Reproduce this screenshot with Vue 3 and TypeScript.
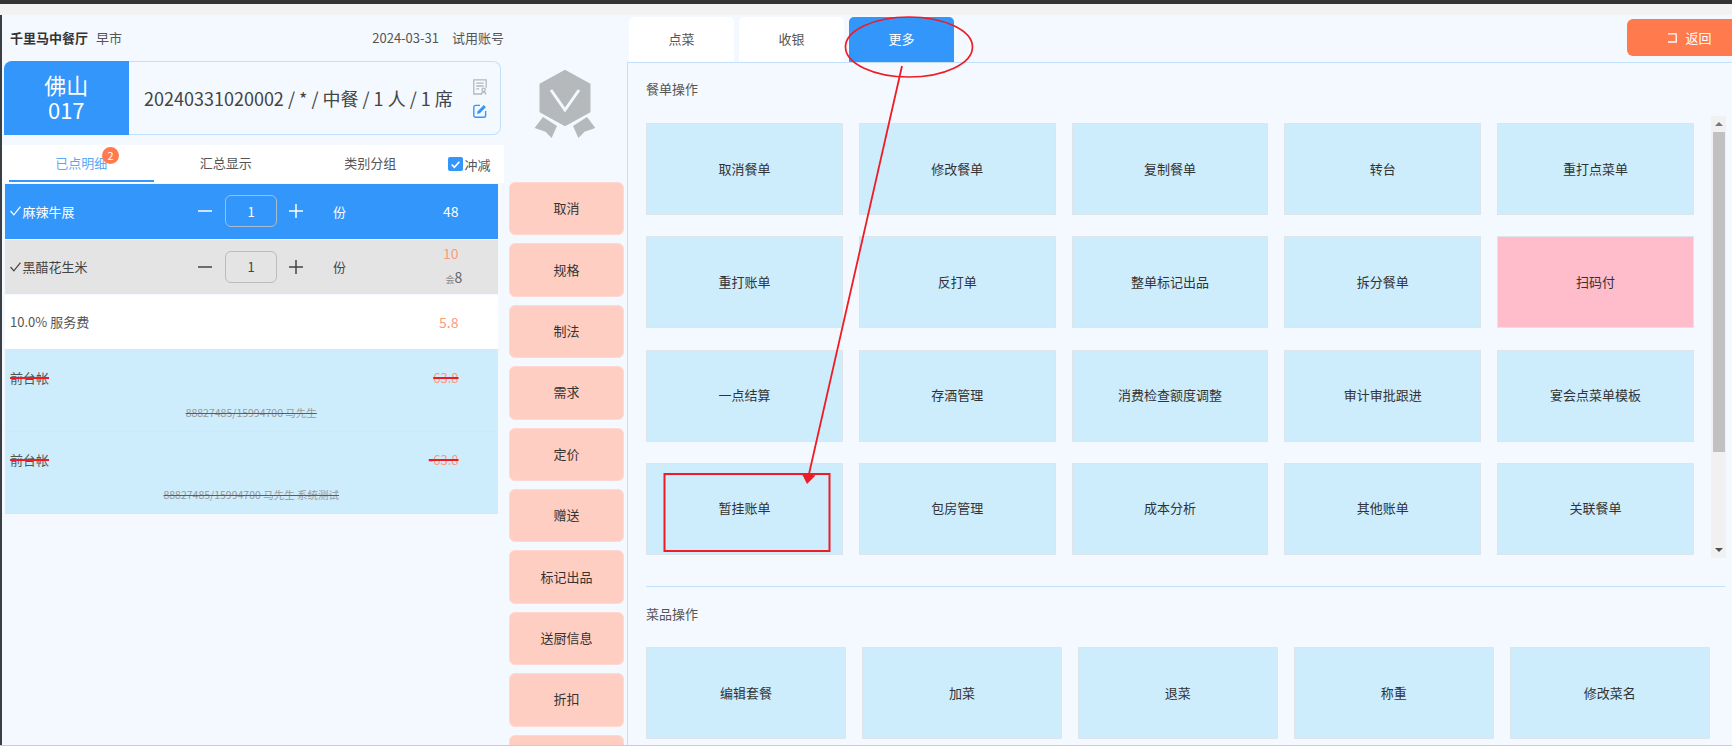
<script setup lang="ts">
const actions: string[] = ['取消', '规格', '制法', '需求', '定价', '赠送', '标记出品', '送厨信息', '折扣', '']
const orderOps: { label: string; pink?: boolean }[] = [
  { label: '取消餐单' }, { label: '修改餐单' }, { label: '复制餐单' }, { label: '转台' }, { label: '重打点菜单' },
  { label: '重打账单' }, { label: '反打单' }, { label: '整单标记出品' }, { label: '拆分餐单' }, { label: '扫码付', pink: true },
  { label: '一点结算' }, { label: '存酒管理' }, { label: '消费检查额度调整' }, { label: '审计审批跟进' }, { label: '宴会点菜单模板' },
  { label: '暂挂账单' }, { label: '包房管理' }, { label: '成本分析' }, { label: '其他账单' }, { label: '关联餐单' }
]
const dishOps: string[] = ['编辑套餐', '加菜', '退菜', '称重', '修改菜名']
</script>

<template>
  <div class="page">
    <div class="topbar"></div>
    <div class="subbar"></div>
    <div class="main">
      <div class="left">
        <div class="head">
          <div><b class="shop">千里马中餐厅</b><span class="meal">早市</span></div>
          <div class="head-right"><span>2024-03-31</span><span>试用账号</span></div>
        </div>

        <div class="info-row">
          <div class="card">
            <div class="table-no"><div>佛山</div><div>017</div></div>
            <div class="order-text">20240331020002 / * / 中餐 / 1 人 / 1 席</div>
            <div class="card-icons">
              <svg width="14" height="16" viewBox="0 0 14 16" fill="none" stroke="#b4b8bc" stroke-width="1.3">
                <path d="M9 15H.8V.8h12.400v8" />
                <path d="M3.200 4.200h7.500M3.200 7h7.500M3.200 9.800h3" />
                <circle cx="10.600" cy="10.800" r="1.600" />
                <path d="M8.400 15.500c.2-1.500 1.100-2.500 2.200-2.500s2 1 2.200 2.500" />
              </svg>
              <svg width="14" height="14" viewBox="0 0 14 14" fill="none" stroke="#3396fb" stroke-width="1.4">
                <path d="M7 1.400H2.600A1.800 1.800 0 0 0 .8 3.200v8.200a1.800 1.800 0 0 0 1.800 1.800h8.200a1.800 1.800 0 0 0 1.800-1.800V7" />
                <path d="M4 10l.7-2.800L10.800 1.100l2.100 2.100-6.100 6.100z" fill="#3396fb" stroke="none" />
              </svg>
            </div>
          </div>
          <div class="medal">
            <svg width="62" height="68" viewBox="0 0 62 68">
              <path d="M.6 58L9 47l14 9-5.400 12-6.100-6.300zM61.400 58L53 47l-14 9 5.400 12 6.100-6.300z" fill="#b5b9bc" />
              <path d="M31 1l24.500 13.500v27L31 55 6.500 41.500v-27z" fill="#b5b9bc" stroke="#b5b9bc" stroke-width="2" stroke-linejoin="round" />
              <path d="M17 20l14 20 14-20" fill="none" stroke="#f4f9ff" stroke-width="3" />
            </svg>
          </div>
        </div>

        <div class="body">
          <div class="orders">
            <div class="tabs">
              <div class="tab active">已点明细<span class="badge">2</span></div>
              <div class="tab">汇总显示</div>
              <div class="tab">类别分组</div>
              <label class="offset">
                <span class="check">
                  <svg width="11" height="11" viewBox="0 0 10 10" fill="none" stroke="#fff" stroke-width="1.600"><path d="M1.500 5l2.500 2.500 4.500-5" /></svg>
                </span>冲减
              </label>
            </div>

            <div class="row dish selected">
              <div class="dish-name"><svg class="tick" width="11" height="10" viewBox="0 0 10 9" fill="none" stroke="currentColor" stroke-width="1.100"><path d="M.5 4.500L3.500 8 9.500 .5" /></svg>麻辣牛展</div>
              <div class="stepper">
                <span class="sym">
                  <svg width="14" height="14" viewBox="0 0 14 14" stroke="currentColor" stroke-width="1.500"><path d="M0 7h14" /></svg>
                </span>
                <span class="qty">1</span>
                <span class="sym">
                  <svg width="14" height="14" viewBox="0 0 14 14" stroke="currentColor" stroke-width="1.500"><path d="M0 7h14M7 0v14" /></svg>
                </span>
              </div>
              <div class="unit">份</div>
              <div class="price">48</div>
            </div>

            <div class="row dish grey">
              <div class="dish-name"><svg class="tick" width="11" height="10" viewBox="0 0 10 9" fill="none" stroke="currentColor" stroke-width="1.100"><path d="M.5 4.500L3.500 8 9.500 .5" /></svg>黑醋花生米</div>
              <div class="stepper">
                <span class="sym">
                  <svg width="14" height="14" viewBox="0 0 14 14" stroke="currentColor" stroke-width="1.500"><path d="M0 7h14" /></svg>
                </span>
                <span class="qty">1</span>
                <span class="sym">
                  <svg width="14" height="14" viewBox="0 0 14 14" stroke="currentColor" stroke-width="1.500"><path d="M0 7h14M7 0v14" /></svg>
                </span>
              </div>
              <div class="unit">份</div>
              <div class="price stack">
                <span class="orange">10</span>
                <span class="member"><small>会</small>8</span>
              </div>
            </div>

            <div class="row fee">
              <div>10.0% 服务费</div>
              <div class="fee-price">5.8</div>
            </div>

            <div class="row ledger">
              <div class="ledger-top">
                <span class="strike name">前台帐</span>
                <span class="strike amount">63.8</span>
              </div>
              <div class="ledger-note"><span class="strike">88827485/15994700 马先生</span></div>
            </div>
            <div class="row ledger">
              <div class="ledger-top">
                <span class="strike name">前台帐</span>
                <span class="strike amount">-63.8</span>
              </div>
              <div class="ledger-note"><span class="strike">88827485/15994700 马先生 系统测试</span></div>
            </div>
          </div>

          <div class="actions">
            <button v-for="(a, i) in actions" :key="i" class="action">{{ a }}</button>
          </div>
        </div>
      </div>

      <div class="right">
        <div class="right-top">
          <div class="rtabs">
            <div class="rtab">点菜</div>
            <div class="rtab">收银</div>
            <div class="rtab on">更多</div>
          </div>
          <button class="back">
            <svg width="11" height="10" viewBox="0 0 11 10" fill="none" stroke="#fff" stroke-width="1.300"><path d="M1 .8h8.200v8.200H1" /></svg>
            <span>返回</span>
          </button>
        </div>

        <div class="panel">
          <div class="sec-title">餐单操作</div>
          <div class="order-area">
            <div class="op-grid">
              <div v-for="op in orderOps" :key="op.label" class="op" :class="{ pink: op.pink }">{{ op.label }}</div>
            </div>
            <div class="scrollbar">
              <i class="arrow up"></i>
              <div class="thumb"></div>
              <i class="arrow down"></i>
            </div>
          </div>
          <div class="divider"></div>
          <div class="sec-title second">菜品操作</div>
          <div class="dish-grid">
            <div v-for="d in dishOps" :key="d" class="op">{{ d }}</div>
          </div>
        </div>
      </div>
    </div>

    <svg class="notes" width="1732" height="746" viewBox="0 0 1732 746" fill="none">
      <ellipse cx="909" cy="47" rx="63.500" ry="30" stroke="#ee1c25" stroke-width="1.700" />
      <path d="M902 66L809 474" stroke="#ee1c25" stroke-width="1.800" />
      <path d="M801.500 473l14 2.500-8.500 8.500z" fill="#ee1c25" />
      <rect x="664.500" y="474" width="165" height="77" stroke="#ee1c25" stroke-width="2" />
    </svg>
  </div>
</template>

<style scoped>
.page {
  position: relative;
  width: 1732px;
  height: 746px;
  overflow: hidden;
  display: flex;
  flex-direction: column;
  background: #f4f9ff;
  font-family: "Noto Sans CJK SC", "Noto Sans", sans-serif;
  color: #333;
  border-bottom: 1px solid #c9cdd1;
  box-sizing: border-box;
}
.topbar { height: 4px; background: #333; flex: none; }
.subbar { height: 11px; background: #f2f2f2; flex: none; }
.main { flex: 1; display: flex; min-height: 0; border-left: 2px solid #3a3f44; }

.left { width: 625px; flex: none; display: flex; flex-direction: column; min-height: 0; }
.head {
  height: 46px;
  flex: none;
  display: flex;
  justify-content: space-between;
  align-items: center;
  padding: 0 0 2px 8px;
  width: 502px;
  box-sizing: border-box;
  font-size: 13px;
  color: #555;
}
.shop { color: #333; font-weight: 700; margin-right: 8px; }
.head-right { display: flex; gap: 13px; }

.info-row { display: flex; flex: none; height: 74px; padding-left: 2px; }
.card {
  width: 497px;
  flex: none;
  box-sizing: border-box;
  display: flex;
  align-items: center;
  background: #f4f9ff;
  border: 1px solid #c2e0fb;
  border-left: none;
  border-radius: 8px;
}
.table-no {
  width: 124.500px;
  height: 74px;
  margin: -1px 0;
  padding-bottom: 2px;
  box-sizing: border-box;
  flex: none;
  background: #3396fb;
  color: #fff;
  border-radius: 8px 0 0 0;
  display: flex;
  flex-direction: column;
  align-items: center;
  justify-content: center;
  font-size: 22px;
  line-height: 25px;
}
.order-text { margin-left: 15.500px; flex: 1; font-size: 18px; color: #444; white-space: nowrap; }
.card-icons {
  width: 27px;
  display: flex;
  flex-direction: column;
  gap: 9px;
  align-items: flex-start;
  flex: none;
}
.medal { width: 62px; flex: none; margin-left: 33px; padding-top: 9px; }

.body { flex: 1; min-height: 0; display: flex; margin-top: 10px; }
.orders { width: 502px; flex: none; }
.tabs {
  height: 38px;
  background: #fff;
  display: flex;
  padding-left: 7px;
  font-size: 13px;
  color: #555;
}
.tab { width: 144.500px; flex: none; line-height: 36px; text-align: center; position: relative; }
.tab.active { color: #5aa8f8; border-bottom: 2px solid #3396fb; height: 35px; }
.badge {
  position: absolute;
  left: 93px;
  top: 1.500px;
  width: 17px;
  height: 17px;
  border-radius: 50%;
  background: #ff7a4d;
  color: #fff;
  font-size: 11px;
  line-height: 17px;
  text-align: center;
}
.offset { display: flex; align-items: center; gap: 2px; margin-left: 5.500px; }
.check {
  width: 14.500px;
  height: 14.500px;
  border-radius: 2px;
  background: #3396fb;
  display: flex;
  align-items: center;
  justify-content: center;
}

.row { margin-left: 3px; width: 492.500px; box-sizing: border-box; font-size: 13px; }
.dish {
  height: 55px;
  display: grid;
  grid-template-columns: 190px 111px 137px 54.500px;
  align-items: center;
  padding-bottom: 1px;
}
.selected { background: #3396fb; color: #fff; margin-top: 1px; }
.grey { background: #e4e4e4; color: #444; margin-top: 1px; height: 54px; }
.dish-name { padding-left: 5px; display: flex; align-items: center; }
.tick { margin-right: 1.500px; flex: none; }
.stepper { display: flex; align-items: center; }
.sym { width: 20px; flex: none; display: flex; justify-content: center; }
.qty {
  width: 52px;
  height: 32px;
  flex: none;
  margin: 0 9px 0 10px;
  box-sizing: border-box;
  border: 1px solid #a9bdd1;
  border-radius: 6px;
  display: flex;
  align-items: center;
  justify-content: center;
}
.grey .qty { border-color: #bbb; }
.unit { padding-left: 27px; }
.price { font-size: 14px; }
.stack { display: flex; flex-direction: column; line-height: 24px; margin-top: -1px; }
.orange { color: #ff9a7a; }
.member { color: #666; margin-left: 2.500px; }
.member small { font-size: 9px; color: #888; }

.fee {
  height: 55px;
  background: #fff;
  display: flex;
  align-items: center;
  justify-content: space-between;
  padding: 0 39px 1px 5px;
  color: #555;
  border-bottom: 1px solid #e4e4e4;
  margin-top: 1px;
}
.fee-price { color: #ff9a7a; font-size: 14px; }
.ledger {
  height: 82px;
  background: #cdecfc;
  border-bottom: 1px solid #dde3e6;
  padding: 0 39px 0 5px;
}
.ledger-top {
  height: 55px;
  display: flex;
  align-items: center;
  justify-content: space-between;
}
.name { color: #555; }
.amount { color: #ff9a7a; }
.ledger-note {
  text-align: center;
  font-size: 10.500px;
  color: #999;
  margin: 1px -39px 0 -5px;
  line-height: 14px;
}
.strike { text-decoration: line-through; text-decoration-color: #ee1c25; text-decoration-thickness: 1.500px; }
.ledger-note .strike { text-decoration-thickness: 1px; }

.actions {
  width: 115px;
  flex: none;
  margin-left: 5px;
  display: flex;
  flex-direction: column;
  gap: 8px;
  padding-top: 37px;
  overflow: hidden;
}
.action {
  height: 53.400px;
  flex: none;
  background: #ffcec2;
  border: 1px solid #ffd9cf;
  border-radius: 6px;
  font: inherit;
  font-size: 13px;
  color: #333;
  padding: 0 0 2px;
}

.right { flex: 1; min-width: 0; display: flex; flex-direction: column; }
.right-top { height: 47px; flex: none; display: flex; justify-content: space-between; padding-top: 2px; box-sizing: border-box; }
.rtabs { display: flex; gap: 5px; padding-left: 2px; }
.rtab {
  width: 105px;
  height: 45px;
  padding-bottom: 2px;
  box-sizing: border-box;
  background: #fff;
  border-radius: 5px 5px 0 0;
  display: flex;
  align-items: center;
  justify-content: center;
  font-size: 13px;
  color: #555;
}
.rtab.on { background: #3396fb; color: #fff; }
.back {
  width: 105px;
  height: 37px;
  margin-top: 2px;
  border: none;
  background: #ff7a4d;
  border-radius: 6px 0 0 6px;
  color: #fff;
  font: inherit;
  font-size: 13px;
  display: flex;
  align-items: center;
  justify-content: center;
  gap: 7px;
  padding: 0 0 0 20px;
}

.panel {
  flex: 1;
  min-height: 0;
  border-top: 1px solid #c2e0fb;
  border-left: 1px solid #c2e0fb;
  padding-left: 18px;
  box-sizing: border-box;
  overflow: hidden;
}
.sec-title { font-size: 13px; color: #555; line-height: 18px; margin-top: 17px; }
.sec-title.second { margin-top: 18px; }
.order-area { margin-top: 18px; display: flex; height: 442px; position: relative; }
.op-grid {
  width: 1048px;
  margin-top: 7px;
  display: grid;
  grid-template-columns: repeat(5, 196.800px);
  grid-auto-rows: 92px;
  column-gap: 16px;
  row-gap: 21.300px;
}
.op {
  background: #cdecfc;
  border: 1px solid #dde5ea;
  box-sizing: border-box;
  display: flex;
  align-items: center;
  justify-content: center;
  padding-bottom: 2px;
  font-size: 13px;
  color: #333;
}
.op.pink { background: #ffbccb; }
.scrollbar {
  position: absolute;
  left: 1065px;
  top: 0;
  width: 15px;
  height: 442px;
  background: #f1f1f1;
  display: flex;
  flex-direction: column;
  align-items: center;
}
.thumb { width: 12px; height: 320px; background: #c1c1c1; margin-top: 6px; flex: none; }
.arrow { width: 0; height: 0; border-left: 4px solid transparent; border-right: 4px solid transparent; flex: none; }
.arrow.up { border-bottom: 4px solid #777; margin-top: 6px; }
.arrow.down { border-top: 4px solid #505050; margin-top: auto; margin-bottom: 6px; }
.divider { height: 1px; background: #c2e0fb; margin-top: 28px; width: 1079px; }
.dish-grid {
  margin-top: 24px;
  display: grid;
  grid-template-columns: repeat(5, 199.800px);
  grid-auto-rows: 92px;
  column-gap: 16.200px;
}

.notes { position: absolute; left: 0; top: 0; pointer-events: none; }
</style>
